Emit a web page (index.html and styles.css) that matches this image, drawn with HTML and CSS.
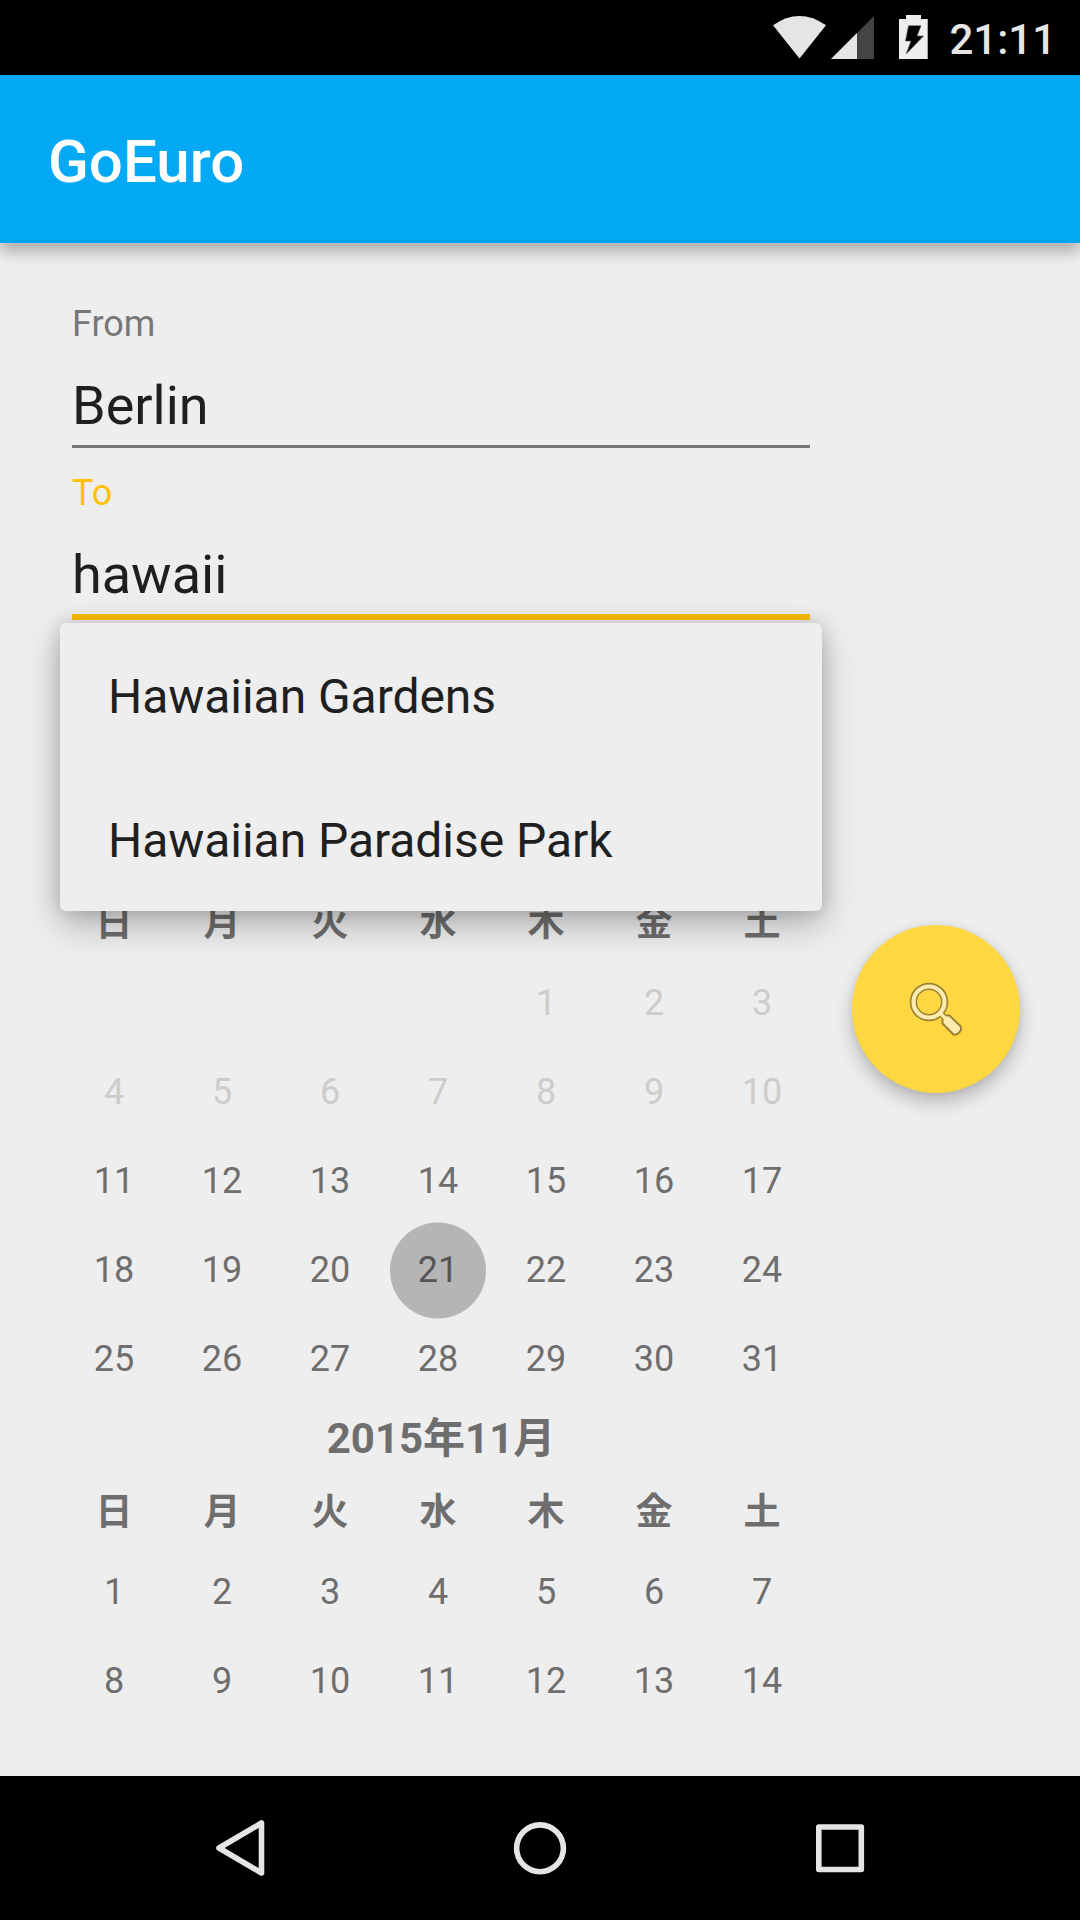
FILE: index.html
```html
<!DOCTYPE html>
<html lang="ja">
<head>
<meta charset="utf-8">
<title>GoEuro</title>
<link rel="stylesheet" href="styles.css">
</head>
<body>
<div class="status-bar">
  <svg class="status-icons" width="160" height="75" viewBox="770 0 160 75">
    <path fill="#e5e5e5" d="M773 25.3Q799.500 6.800 826 25.300L799.500 58.500Z"/>
    <path fill="#444" d="M874 16V59H831Z"/>
    <path fill="#e5e5e5" d="M857 33V59H831Z"/>
    <path fill="#eee" d="M906 15h15v4h6.700v40h-28.700V19h7z"/>
    <path fill="#000" stroke="#555" stroke-width=".6" d="M908.500 25.700H921L917 36H923.500L906.200 54L911 41H905.500Z"/>
  </svg>
  <span class="clock">21:11</span>
</div>
<header class="app-bar"><h1 class="app-title">GoEuro</h1></header>
<main class="content">
  <section class="search-form">
    <div class="field">
      <div class="field-label">From</div>
      <div class="field-value">Berlin</div>
    </div>
    <div class="field field-active">
      <div class="field-label">To</div>
      <div class="field-value">hawaii</div>
    </div>
    <div class="calendar">
      <div class="weekdays"><span>日</span><span>月</span><span>火</span><span>水</span><span>木</span><span>金</span><span>土</span></div>
      <div class="days">
        <span class="off first-thu">1</span><span class="off">2</span><span class="off">3</span>
        <span class="off">4</span><span class="off">5</span><span class="off">6</span><span class="off">7</span><span class="off">8</span><span class="off">9</span><span class="off">10</span>
        <span>11</span><span>12</span><span>13</span><span>14</span><span>15</span><span>16</span><span>17</span>
        <span>18</span><span>19</span><span>20</span><span class="selected">21</span><span>22</span><span>23</span><span>24</span>
        <span>25</span><span>26</span><span>27</span><span>28</span><span>29</span><span>30</span><span>31</span>
      </div>
      <h2 class="month">2015年11月</h2>
      <div class="weekdays"><span>日</span><span>月</span><span>火</span><span>水</span><span>木</span><span>金</span><span>土</span></div>
      <div class="days">
        <span>1</span><span>2</span><span>3</span><span>4</span><span>5</span><span>6</span><span>7</span>
        <span>8</span><span>9</span><span>10</span><span>11</span><span>12</span><span>13</span><span>14</span>
      </div>
    </div>
    <div class="suggestions">
      <div class="suggestion">Hawaiian Gardens</div>
      <div class="suggestion">Hawaiian Paradise Park</div>
    </div>
  </section>
  <div class="action">
    <button class="fab" aria-label="Search">
      <svg width="168" height="168" viewBox="0 0 168 168">
        <g stroke-linecap="round" fill="none">
          <path stroke="#9a8336" stroke-width="6" d="M89 89L93 93"/>
          <path stroke="#9a8336" stroke-width="2" stroke-linejoin="round" fill="#ffebad" d="M92 90.500H97.500L108.300 101C111 104.500 106.500 110.500 101.500 109.500L90.500 98.500V93Z"/>
          <circle cx="77" cy="77" r="15.600" stroke="#9a8336" stroke-width="7.400"/>
          <circle cx="77" cy="77" r="15.500" stroke="#ffebad" stroke-width="4.200"/>
          <path stroke="#ffebad" stroke-width="3.400" d="M88.500 88.500L94 94"/>
        </g>
      </svg>
    </button>
  </div>
</main>
<nav class="nav-bar">
  <svg width="1080" height="144" viewBox="0 0 1080 144" fill="none" stroke="#e5e5e5" stroke-width="5.600" stroke-linejoin="round">
    <path d="M261.500 47V97L219 72Z"/>
    <circle cx="540" cy="72.300" r="23.400"/>
    <rect x="818.800" y="51" width="42.500" height="42.500"/>
  </svg>
</nav>
</body>
</html>
```
FILE: styles.css
```css
* { box-sizing: border-box; }
body {
  margin: 0;
  width: 1080px;
  height: 1920px;
  display: flex;
  flex-direction: column;
  overflow: hidden;
  background: #eee;
  font-family: Roboto, "Noto Sans CJK JP", sans-serif;
}
svg { display: block; }
.status-bar {
  height: 75px;
  background: #000;
  display: flex;
  justify-content: flex-end;
  gap: 19px;
  padding-right: 24px;
}
.clock {
  color: #e5e5e5;
  font-size: 42px;
  font-weight: 500;
  line-height: 79px;
}
.app-bar {
  height: 168px;
  padding-left: 48px;
  background: #03a9f4;
  box-shadow: 0 9px 14px rgba(0, 0, 0, .27);
}
.app-title {
  margin: 0;
  color: #fff;
  font-size: 60px;
  font-weight: 500;
  line-height: 173px;
}
.content {
  height: 1533px;
  display: flex;
  gap: 30px;
  padding: 0 60px;
}
.search-form {
  position: relative;
  width: 762px;
  margin-top: 57px;
}
.field {
  margin: 0 12px 21px;
  border-bottom: 3px solid #777;
}
.field-label {
  margin-bottom: 26px;
  color: #777;
  font-size: 36px;
  line-height: 48px;
}
.field-value {
  padding-bottom: 7px;
  color: #1f1f1f;
  font-size: 54px;
  line-height: 64px;
}
.field-active {
  margin-bottom: 280px;
  border-bottom: 6px solid #ffc107;
}
.field-active .field-label { color: #ffc107; }
.calendar {
  width: 756px;
  color: #6e6e6e;
  font-size: 36px;
}
.weekdays, .days {
  display: grid;
  grid-template-columns: repeat(7, 108px);
  text-align: center;
}
.weekdays {
  margin-bottom: 11px;
  font-size: 37px;
  font-weight: 700;
  line-height: 48px;
  height: 48px;
}
.days {
  grid-auto-rows: 89px;
  line-height: 89px;
}
.off { color: #ccc; }
.first-thu { grid-column: 5; }
.selected {
  color: #555;
  background: radial-gradient(circle, #b5b5b5 47.5px, transparent 48.500px);
  margin: -4px 0;
  line-height: 97px;
}
.month {
  margin: 5px 0 20px;
  padding-left: 6px;
  height: 60px;
  font-size: 42px;
  font-weight: 700;
  line-height: 60px;
  text-align: center;
}
.suggestions {
  position: absolute;
  left: 0;
  top: 323px;
  width: 762px;
  height: 288px;
  border-radius: 6px;
  background: #eee;
  box-shadow: 0 14px 36px rgba(0, 0, 0, .25), 0 0 20px rgba(0, 0, 0, .16);
}
.suggestion {
  height: 144px;
  padding-left: 48px;
  color: #1f1f1f;
  font-size: 48px;
  letter-spacing: -.05px;
  line-height: 148px;
}
.action {
  display: flex;
  align-items: center;
  margin-top: -1px;
  margin-bottom: 1px;
}
.fab {
  width: 168px;
  height: 168px;
  padding: 0;
  border: 0;
  border-radius: 50%;
  background: #ffd740;
  box-shadow: 0 9px 18px rgba(0, 0, 0, .24), 0 0 6px rgba(0, 0, 0, .06);
}
.nav-bar {
  height: 144px;
  background: #000;
}
```
